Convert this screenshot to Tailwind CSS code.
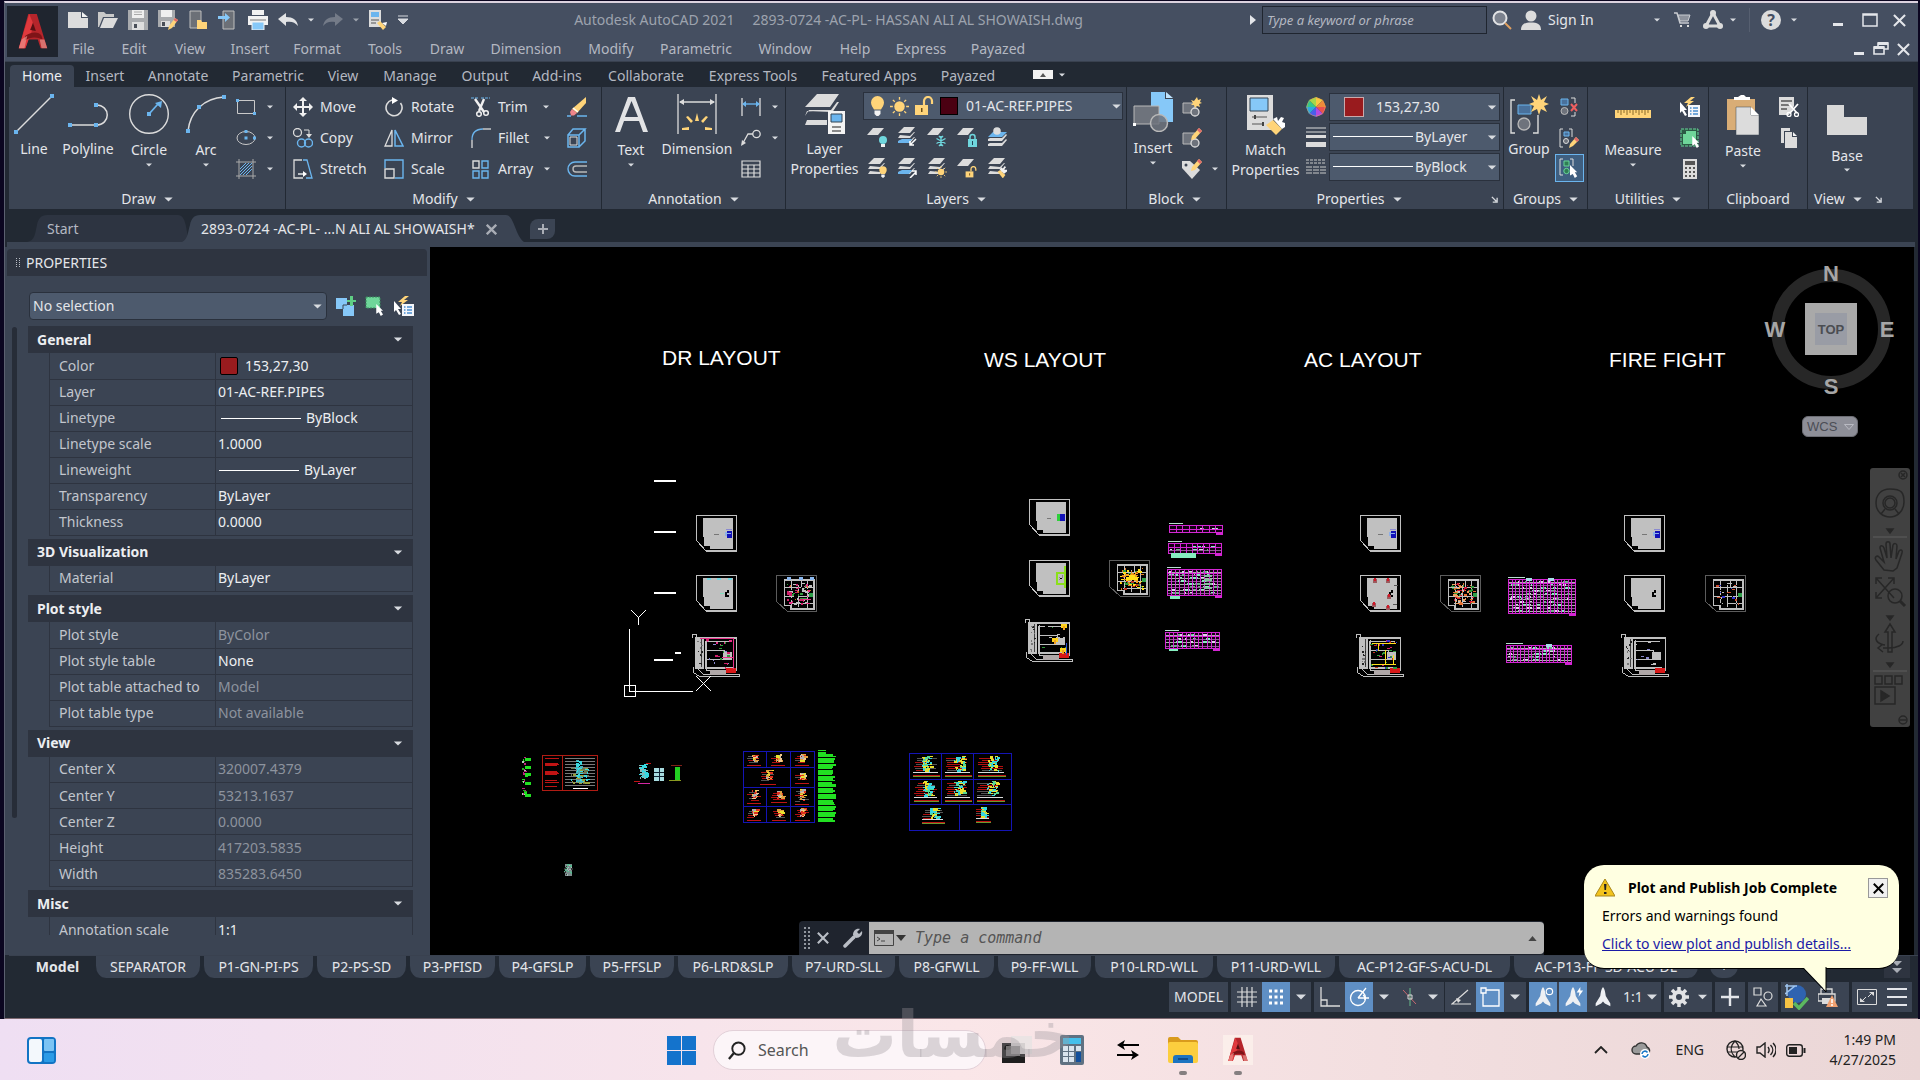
<!DOCTYPE html>
<html lang="en">
<head>
  <meta charset="UTF-8" />
  <meta name="viewport" content="width=device-width, initial-scale=1.0" />
  <title>Autodesk AutoCAD 2021 - 2893-0724 -AC-PL- HASSAN ALI AL SHOWAISH.dwg</title>
  <script src="https://cdn.jsdelivr.net/npm/@tailwindcss/browser@4"></script>
</head>
<body class="h-screen flex flex-col overflow-hidden bg-[#0b0620] pt-px text-[14px] leading-5 text-[#e4e6ea] whitespace-nowrap font-['Noto_Sans','Open_Sans',sans-serif]">

  <!-- Shared icons -->
  <svg class="hidden">
    <symbol id="dd" viewBox="0 0 10 6"><path d="M0 .5h10L5 5.5z" fill="#d8dbe0"/></symbol>
    <symbol id="x" viewBox="0 0 14 14"><path d="M1 1l12 12M13 1L1 13" stroke="#e4e6ea" stroke-width="2.2" fill="none"/></symbol>
    <symbol id="launch" viewBox="0 0 8 8"><path d="M1 1l5 5M7 2v5H2" stroke="#d8dbe0" stroke-width="1.5" fill="none"/></symbol>
    <symbol id="sheets" viewBox="0 0 20 20"><path d="M7 0h11l-5 6H1zM3 8l-2 3h12l5-6h-1l-4 4zM3 13l-2 3h12l5-6h-1l-4 4z" fill="#dcdcdc"/></symbol>
    <symbol id="sheet" viewBox="0 0 20 20"><path d="M6 1h11l-6 7H0z" fill="#dcdcdc"/></symbol>
    <symbol id="sun" viewBox="0 0 20 20"><circle cx="10" cy="10" r="5.5" fill="#ffd479"/><path d="M10 0v3M10 17v3M0 10h3M17 10h3M3 3l2 2M15 15l2 2M17 3l-2 2M5 15l-2 2" stroke="#ffd479" stroke-width="1.4"/></symbol>
    <symbol id="bulb" viewBox="0 0 14 20"><path d="M7 0a6.500 6.500 0 0 1 6.500 6.500c0 3-2 5-3 7h-7c-1-2-3-4-3-7A6.500 6.500 0 0 1 7 0z" fill="#ffd479"/><path d="M4 14.500h6V18l-2 2H6l-2-2z" fill="#f3f3f3"/></symbol>
    <symbol id="unlock" viewBox="0 0 20 20"><path d="M1 9h13v10H1z" fill="#ffd479"/><path d="M10 9V5a4 4 0 0 1 8 0v3" fill="none" stroke="#ffd479" stroke-width="2.2"/><path d="M7 12h1.500v4H7z" fill="#6b4d17"/></symbol>
    <symbol id="brush" viewBox="0 0 20 20"><path d="M4 9l4-3 8 8-4 5z" fill="#ffd479"/><path d="M7 5l3-3 2 2 3-4 2 2-3 3 3 1 2-1v3l-5 4z" fill="#f3f3f3"/></symbol>
    <symbol id="cur" viewBox="0 0 10 16"><path d="M0 0l9 9H6l3 5-3 2-2.500-5L0 13z" fill="#fff"/></symbol>
    <symbol id="quick" viewBox="0 0 20 20"><path d="M11 0L4 6h4L6 10l8-6h-4l5-4z" fill="#ffd479"/><path d="M0 5l7 8H4l3 5-2 1-3-5-2 2z" fill="#fff"/><path d="M8 8h12v12H8z" fill="#f4f6fa"/><path d="M10 11h1.500M10 14h1.500M10 17h1.500M13 11h5M13 14h5M13 17h5" stroke="#4a8fd0" stroke-width="1.300"/></symbol>
    <symbol id="arrowA" viewBox="0 0 20 24"><path d="M10 1c2 2 2.500 6 3 10l5 8v3l-6-3-2-2-2 2-6 3v-3l5-8C7.500 7 8 3 10 1z" fill="#eef0f3"/></symbol>
    <symbol id="acad" viewBox="0 0 32 40"><path d="M11 1h9l11 36h-7l-3-9H11l-3 9H1z" fill="#b5252b"/><path d="M12 1l5 12-9 24H1z" fill="#e0393d"/><path d="M8 24c8-5 14-4 17 0l1 4c-6-3-12-3-19 1z" fill="#7e1418"/><path d="M4 28l6-4-3 13H1zM23 28l5 0 3 9h-6z" fill="#e9918c" opacity=".7"/><path d="M13 18l3-8 3 9z" fill="#571013"/></symbol>
  </svg>

  <!-- Application window -->
  <div class="relative flex-1 min-h-0 flex flex-col ml-1 mr-[2px] border-t-2 border-l border-b border-t-[#dcd3df] border-l-[#5b6070] border-b-[#7f6a72] bg-[#222933]">

    <!-- Title bar and menus -->
    <header class="flex bg-[#454f61] border-b border-[#39414f] text-[#b4b8c1]">
      <button class="ml-[2px] mt-[3px] mb-1 size-[51px] bg-[#1f252f] flex items-center justify-center shrink-0" aria-label="Application menu"><svg class="w-8 h-[38px]"><use href="#acad"/></svg></button>
      <div class="flex-1 min-w-0">
        <div class="flex items-center h-[34px] pl-[5px] pr-[5px]">
          <button class="w-[30px] flex justify-center" aria-label="New"><svg class="size-5" viewBox="0 0 20 20"><path d="M0 2h13v6h7v10H0z" fill="#dcdcdc"/><path d="M14 2l6 5h-6z" fill="#f2f2f2"/></svg></button>
          <button class="w-[30px] flex justify-center" aria-label="Open"><svg class="size-5" viewBox="0 0 20 20"><path d="M0 2h6l2 2h8v3H5L1 17H0z" fill="#c9c9c9"/><path d="M6 8h14l-5 10H2z" fill="#dcdcdc"/></svg></button>
          <button class="w-[30px] flex justify-center" aria-label="Save"><svg class="size-5" viewBox="0 0 20 20"><path d="M0 0h20v20H0z" fill="#a9abae"/><path d="M4 0h12v8H4z" fill="#efefef"/><path d="M4 12h12v8H4z" fill="#dedede"/><path d="M6 14h3v4H6z" fill="#4a4f58"/><path d="M6 2h8M6 4.500h8" stroke="#aaa"/></svg></button>
          <button class="w-[30px] flex justify-center" aria-label="Save as"><svg class="size-5" viewBox="0 0 20 20"><path d="M0 0h17v17H0z" fill="#a9abae"/><path d="M3 0h11v7H3z" fill="#efefef"/><path d="M3 11h9v6H3z" fill="#dedede"/><path d="M4 12h3v4H4z" fill="#4a4f58"/><path d="M17 8l3 2-6 8-4 2 1-4z" fill="#ffd479"/><path d="M17 8l3 2-1.500 2-3-2z" fill="#e06a6a"/></svg></button>
          <button class="w-[30px] flex justify-center" aria-label="Open from mobile"><svg class="size-5" viewBox="0 0 20 20"><path d="M2 1h11v17H2z" fill="#6c7077" stroke="#bfbfbf"/><path d="M9 10h4l1 2h5v7H9z" fill="#ffd479"/></svg></button>
          <button class="w-[30px] flex justify-center" aria-label="Save to mobile"><svg class="size-5" viewBox="0 0 20 20"><path d="M5 1h11v18H5z" fill="#6c7077" stroke="#bfbfbf"/><path d="M0 6h7V3l5 4.500L7 12V9H0z" fill="#86c8f8"/></svg></button>
          <button class="w-[30px] flex justify-center" aria-label="Plot"><svg class="size-5" viewBox="0 0 20 20"><path d="M4 0h12v5H4zM0 6h20v9H0z" fill="#f2f2f2"/><path d="M4 12h12v8H4z" fill="#86c8f8" stroke="#f2f2f2"/><path d="M2 10h16" stroke="#777"/></svg></button>
          <button class="w-[30px] flex justify-center" aria-label="Undo"><svg class="size-5" viewBox="0 0 20 20"><path d="M0 9l8-6v4c7 0 11 3 12 9-3-4-7-5-12-4v4z" fill="#e2e3e5"/></svg></button>
          <button class="w-[15px] flex justify-center" aria-label="Undo list"><svg class="w-[6px] h-1"><use href="#dd"/></svg></button>
          <button class="w-[30px] flex justify-center" aria-label="Redo"><svg class="size-5" viewBox="0 0 20 20"><path d="M20 9l-8-6v4C5 7 1 10 0 16c3-4 7-5 12-4v4z" fill="#747b88"/></svg></button>
          <button class="w-[15px] flex justify-center opacity-60" aria-label="Redo list"><svg class="w-[6px] h-1"><use href="#dd"/></svg></button>
          <button class="w-[30px] flex justify-center" aria-label="Match"><svg class="size-5" viewBox="0 0 20 20"><path d="M1 0h12v17H1z" fill="#dcdcdc"/><path d="M3 2h8v5H3z" fill="#6bb5ee"/><path d="M3 10h8M3 13h5" stroke="#555"/><path d="M9 13l3-2 6 6-3 3z" fill="#ffd479"/><path d="M14 13l5-1-1 4z" fill="#fff"/></svg></button>
          <button class="w-5 flex justify-center" aria-label="Customize"><svg class="w-[10px] h-[10px]" viewBox="0 0 10 10"><path d="M0 1h10M0 4h10L5 9z" fill="#d8dbe0" stroke="#d8dbe0"/></svg></button>
          <h1 class="flex-1 text-center text-[#9da3ae] whitespace-pre">Autodesk AutoCAD 2021     2893-0724 -AC-PL- HASSAN ALI AL SHOWAISH.dwg</h1>
          <button class="w-[18px] flex justify-center" aria-label="Hide search"><svg class="w-[6px] h-[10px]" viewBox="0 0 6 10"><path d="M0 0l6 5-6 5z" fill="#e4e6ea"/></svg></button>
          <input type="text" aria-label="Search help" placeholder="Type a keyword or phrase" class="w-[225px] h-7 px-1 bg-[#454f61] border border-[#1f252f] italic text-[13px] placeholder:text-[#b4b8c1]" />
          <button class="w-[29px] flex justify-center" aria-label="Search"><svg class="size-5" viewBox="0 0 20 20"><circle cx="8" cy="8" r="6.500" fill="#7c828e" stroke="#e2e3e5" stroke-width="2"/><path d="M13 13l6 6" stroke="#e0a060" stroke-width="2"/></svg></button>
          <button class="w-[83px] pl-[5px] flex items-center gap-[7px] text-[#e4e6ea]"><svg class="size-5" viewBox="0 0 20 20"><circle cx="10" cy="6" r="5.500" fill="#dcdcdc"/><path d="M0 20c0-6 4-7.500 10-7.500S20 14 20 20z" fill="#dcdcdc"/></svg>Sign In</button>
          <button class="ml-[50px] w-4 flex justify-center" aria-label="Account"><svg class="w-[6px] h-1"><use href="#dd"/></svg></button>
          <button class="w-[34px] flex justify-center" aria-label="App store"><svg class="size-[18px]" viewBox="0 0 18 18"><path d="M1 2h3l3 10h9" fill="none" stroke="#c9ccd1" stroke-width="1.500"/><path d="M5 4h12l-2 6H7z" fill="#8d929c" stroke="#c9ccd1"/><path d="M7 14h2v2H7zM14 14h2v2h-2z" fill="#dcdcdc"/></svg></button>
          <button class="w-[27px] flex justify-center" aria-label="Autodesk app"><svg class="size-5" viewBox="0 0 20 20"><path d="M10 3L3 16h14z" fill="none" stroke="#dcdcdc" stroke-width="3"/><circle cx="10" cy="3" r="3" fill="#dcdcdc"/><circle cx="3" cy="16" r="3" fill="#dcdcdc"/><circle cx="17" cy="16" r="3" fill="#dcdcdc"/></svg></button>
          <button class="w-[14px] flex justify-center" aria-label="App list"><svg class="w-[6px] h-1"><use href="#dd"/></svg></button>
          <span class="ml-[9px] mr-[6px] w-px h-6 bg-[#565f70]"></span>
          <button class="w-[30px] flex justify-center" aria-label="Help"><span class="size-5 rounded-full bg-[#dcdcdc] text-[#454f61] text-[16px] font-bold leading-5">?</span></button>
          <button class="w-4 flex justify-center" aria-label="Help list"><svg class="w-[6px] h-1"><use href="#dd"/></svg></button>
          <button class="ml-5 w-8 flex justify-center" aria-label="Minimize"><svg class="size-[14px]" viewBox="0 0 14 14"><path d="M2 10h10v3H2z" fill="#e4e6ea"/></svg></button>
          <button class="w-8 flex justify-center" aria-label="Maximize"><svg class="size-4" viewBox="0 0 16 16"><path d="M1 2h14v12H1zM1 3h14" fill="none" stroke="#e4e6ea" stroke-width="1.500"/></svg></button>
          <button class="w-[27px] flex justify-center" aria-label="Close"><svg class="size-[13px]"><use href="#x"/></svg></button>
        </div>
        <nav class="flex items-center h-6 pl-px">
          <a href="#" class="w-[49px] text-center">File</a>
          <a href="#" class="w-[52px] text-center">Edit</a>
          <a href="#" class="w-[60px] text-center">View</a>
          <a href="#" class="w-[60px] text-center">Insert</a>
          <a href="#" class="w-[74px] text-center">Format</a>
          <a href="#" class="w-[62px] text-center">Tools</a>
          <a href="#" class="w-[62px] text-center">Draw</a>
          <a href="#" class="w-[96px] text-center">Dimension</a>
          <a href="#" class="w-[74px] text-center">Modify</a>
          <a href="#" class="w-[96px] text-center">Parametric</a>
          <a href="#" class="w-[82px] text-center">Window</a>
          <a href="#" class="w-[58px] text-center">Help</a>
          <a href="#" class="w-[74px] text-center">Express</a>
          <a href="#" class="w-[80px] text-center">Payazed</a>
          <span class="flex-1"></span>
          <button class="w-[22px] flex justify-center" aria-label="Minimize drawing"><svg class="size-[14px]" viewBox="0 0 14 14"><path d="M2 10h10v3H2z" fill="#e4e6ea"/></svg></button>
          <button class="w-[22px] flex justify-center" aria-label="Restore drawing"><svg class="size-4" viewBox="0 0 16 16"><path d="M5 5V2h10v6h-4M1 6h10v7H1z" fill="none" stroke="#e4e6ea" stroke-width="1.600"/><path d="M5 1h10v3H5zM1 5h10v3H1z" fill="#e4e6ea"/></svg></button>
          <button class="w-[22px] mr-1 flex justify-center" aria-label="Close drawing"><svg class="size-[13px]"><use href="#x"/></svg></button>
        </nav>
      </div>
    </header>

    <!-- Ribbon tabs -->
    <nav class="flex items-end h-[25px] pl-[5px] leading-[22px] text-[#b4b8c1]">
      <a href="#" class="w-16 text-center rounded-t-sm bg-[#3b4453] text-[#eceef1]">Home</a>
      <a href="#" class="w-[62px] text-center">Insert</a>
      <a href="#" class="w-[84px] text-center">Annotate</a>
      <a href="#" class="w-[96px] text-center">Parametric</a>
      <a href="#" class="w-[54px] text-center">View</a>
      <a href="#" class="w-[80px] text-center">Manage</a>
      <a href="#" class="w-[70px] text-center">Output</a>
      <a href="#" class="w-[74px] text-center">Add-ins</a>
      <a href="#" class="w-[104px] text-center">Collaborate</a>
      <a href="#" class="w-[110px] text-center">Express Tools</a>
      <a href="#" class="w-[122px] text-center">Featured Apps</a>
      <a href="#" class="w-[76px] text-center">Payazed</a>
      <button class="self-center ml-[27px] flex items-center gap-[6px]" aria-label="Minimize ribbon"><svg class="w-5 h-[9px]" viewBox="0 0 20 9"><path d="M0 0h20v9H0z" fill="#f2f2f2"/><path d="M7 7l3-4 3 4z" fill="#555"/></svg><svg class="w-[6px] h-1"><use href="#dd"/></svg></button>
    </nav>

    <!-- Ribbon -->
    <div class="flex h-[122px] ml-1 mr-[5px] bg-[#3b4453]">
      <section class="w-[277px] border-r border-[#222933] flex flex-col shrink-0">
        <div class="flex flex-1">
          <button class="w-[50px] pt-[7px] flex flex-col items-center justify-start"><svg class="size-10" viewBox="0 0 40 40"><path d="M2 38L38 2" stroke="#dcdcdc" stroke-width="1.500"/><path d="M0 36h4v4H0zM36 0h4v4h-4z" fill="#6bb5ee"/></svg><span class="mt-[5px]">Line</span></button>
          <button class="w-[58px] pt-[7px] flex flex-col items-center justify-start"><svg class="size-10" viewBox="0 0 40 40"><path d="M2 31h26c15 0 15-20 0-20" fill="none" stroke="#dcdcdc" stroke-width="1.500"/><path d="M0 29h4v4H0zM26 29h4v4h-4zM26 9h4v4h-4z" fill="#6bb5ee"/></svg><span class="mt-[5px]">Polyline</span></button>
          <button class="w-16 pt-[7px] flex flex-col items-center justify-start"><svg class="size-10" viewBox="0 0 40 40"><circle cx="20" cy="20" r="19.300" fill="none" stroke="#dcdcdc" stroke-width="1.400"/><path d="M20 20l9-10" stroke="#6bb5ee" stroke-width="1.800"/><path d="M26 9l7-2-1 7zM18 18h4v4h-4z" fill="#6bb5ee"/></svg><span class="mt-[6px]">Circle</span><svg class="w-[6px] h-1 mt-[3px]"><use href="#dd"/></svg></button>
          <button class="w-[50px] pt-[7px] flex flex-col items-center justify-start"><svg class="size-10" viewBox="0 0 40 40"><path d="M2 37C4 18 18 4 38 3" fill="none" stroke="#dcdcdc" stroke-width="1.500"/><path d="M0 35h4v4H0zM11 11h4v4h-4zM36 1h4v4h-4z" fill="#6bb5ee"/></svg><span class="mt-[6px]">Arc</span><svg class="w-[6px] h-1 mt-[3px]"><use href="#dd"/></svg></button>
          <div class="pt-1 pl-[5px]">
            <button class="flex items-center gap-[11px] h-[31px]" aria-label="Rectangle"><svg class="size-5" viewBox="0 0 20 20"><path d="M1.500 3.500h17v13h-17z" fill="none" stroke="#c9c9c9"/><path d="M0 2h3v3H0zM17 15h3v3h-3z" fill="#6bb5ee"/></svg><svg class="w-[6px] h-1"><use href="#dd"/></svg></button>
            <button class="flex items-center gap-[11px] h-[31px]" aria-label="Ellipse"><svg class="size-5" viewBox="0 0 20 20"><ellipse cx="10" cy="10" rx="9" ry="6.500" fill="none" stroke="#c9c9c9"/><path d="M8.500 8.500h3v3h-3zM8.500 2h3v3h-3zM17 8.500h3v3h-3z" fill="#6bb5ee"/></svg><svg class="w-[6px] h-1"><use href="#dd"/></svg></button>
            <button class="flex items-center gap-[11px] h-[31px]" aria-label="Hatch"><svg class="size-5" viewBox="0 0 20 20"><path d="M3 0v20M17 0v20M0 3h20M0 17h20" stroke="#aaa"/><path d="M4 10l6-6M4 16L16 4M10 16l6-6M4 13l9-9M7 16l9-9" stroke="#6bb5ee"/></svg><svg class="w-[6px] h-1"><use href="#dd"/></svg></button>
          </div>
        </div>
        <button class="h-5 flex items-center justify-center gap-2">Draw<svg class="w-[9px] h-[5px]"><use href="#dd"/></svg></button>
      </section>

      <section class="w-[316px] border-r border-[#222933] flex flex-col shrink-0">
        <div class="flex flex-1 pt-1 pl-[7px]">
          <div class="w-[91px]">
            <button class="flex items-center gap-[7px] h-[31px]"><svg class="size-5" viewBox="0 0 20 20"><path d="M10 0l4 4h-3v5h5V6l4 4-4 4v-3h-5v5h3l-4 4-4-4h3v-5H4v3l-4-4 4-4v3h5V4H6z" fill="#f0f0f0"/></svg>Move</button>
            <button class="flex items-center gap-[7px] h-[31px]"><svg class="size-5" viewBox="0 0 20 20"><circle cx="4.500" cy="4.500" r="4" fill="none" stroke="#dcdcdc" stroke-width="1.300"/><path d="M11 2h5v5" fill="none" stroke="#dcdcdc"/><path d="M13 6h6l-3 4z" fill="#dcdcdc"/><circle cx="8.500" cy="15" r="4" fill="none" stroke="#6bb5ee" stroke-width="1.400"/><circle cx="15.500" cy="15" r="4" fill="none" stroke="#6bb5ee" stroke-width="1.400"/></svg>Copy</button>
            <button class="flex items-center gap-[7px] h-[31px]"><svg class="size-5" viewBox="0 0 20 20"><path d="M9 1H1v18h9" fill="none" stroke="#dcdcdc" stroke-width="1.300"/><path d="M10 1h4l5 18h-6" fill="none" stroke="#6bb5ee" stroke-width="1.300"/><path d="M5 15h6" stroke="#fff" stroke-width="1.300"/><path d="M10 12l4 3-4 3z" fill="#fff"/></svg>Stretch</button>
          </div>
          <div class="w-[87px]">
            <button class="flex items-center gap-[7px] h-[31px]"><svg class="size-5" viewBox="0 0 20 20"><path d="M8 3a8 8 0 1 0 8.500 3" fill="none" stroke="#dcdcdc" stroke-width="1.600"/><path d="M8 0l6 3.500L8 7z" fill="#fff"/></svg>Rotate</button>
            <button class="flex items-center gap-[7px] h-[31px]"><svg class="size-5" viewBox="0 0 20 20"><path d="M8 2v16H1z" fill="none" stroke="#dcdcdc" stroke-width="1.300"/><path d="M11 2v16h8z" fill="none" stroke="#6bb5ee" stroke-width="1.500"/></svg>Mirror</button>
            <button class="flex items-center gap-[7px] h-[31px]"><svg class="size-5" viewBox="0 0 20 20"><path d="M1 9V1h18v18h-8" fill="none" stroke="#6bb5ee" stroke-width="1.400"/><path d="M1 10h9v9H1z" fill="none" stroke="#dcdcdc" stroke-width="1.400"/></svg>Scale</button>
          </div>
          <div class="w-[96px]">
            <button class="flex items-center gap-[7px] h-[31px]"><svg class="size-5" viewBox="0 0 20 20"><path d="M0 1h8M10 1h9" stroke="#6bb5ee" stroke-dasharray="3 1"/><path d="M4 2l9 13M13 2L8 14" stroke="#f0f0f0" stroke-width="2.400"/><circle cx="8" cy="17" r="2.300" fill="none" stroke="#f0f0f0" stroke-width="1.500"/><circle cx="15" cy="16" r="2.300" fill="none" stroke="#f0f0f0" stroke-width="1.500"/></svg>Trim<svg class="w-[6px] h-1 ml-2"><use href="#dd"/></svg></button>
            <button class="flex items-center gap-[7px] h-[31px]"><svg class="size-5" viewBox="0 0 20 20"><path d="M1 20V12" stroke="#dcdcdc" stroke-width="1.300"/><path d="M1 12C1 5 5 1 12 1" fill="none" stroke="#6bb5ee" stroke-width="1.300"/><path d="M12 1h8" stroke="#dcdcdc" stroke-width="1.300"/></svg>Fillet<svg class="w-[6px] h-1 ml-2"><use href="#dd"/></svg></button>
            <button class="flex items-center gap-[7px] h-[31px]"><svg class="size-5" viewBox="0 0 20 20"><path d="M2 12h6v7H2zM11 12h6v7h-6zM11 2h6v7h-6z" fill="none" stroke="#6bb5ee" stroke-width="1.400"/><path d="M2 2h6v7H2z" fill="none" stroke="#dcdcdc" stroke-width="1.400"/></svg>Array<svg class="w-[6px] h-1 ml-1"><use href="#dd"/></svg></button>
          </div>
          <div>
            <button class="flex items-center h-[31px]" aria-label="Erase"><svg class="size-5" viewBox="0 0 20 20"><path d="M0 19h4M10 19h10" stroke="#6bb5ee" stroke-width="1.500"/><path d="M19 0v6l-9 10-5-4z" fill="#ffd479"/><path d="M5 12l5 4-3 2.500H4L3 15z" fill="#f0868a"/><path d="M6 11l5 4" stroke="#fff" stroke-width="1.500"/></svg></button>
            <button class="flex items-center h-[31px]" aria-label="Explode"><svg class="size-5" viewBox="0 0 20 20"><path d="M1 7h11v12H1zM1 7l5-6h12l-6 6M18 1v12l-6 6" fill="none" stroke="#6bb5ee" stroke-width="1.500"/><path d="M3 9h7v8H3z" fill="none" stroke="#dcdcdc"/></svg></button>
            <button class="flex items-center h-[31px]" aria-label="Offset"><svg class="size-5" viewBox="0 0 20 20"><path d="M20 3H8a7 7 0 0 0 0 14h12" fill="none" stroke="#6bb5ee" stroke-width="1.400"/><path d="M20 7H9a3 3 0 0 0 0 6h11" fill="none" stroke="#b9b9b9" stroke-width="1.400"/></svg></button>
          </div>
        </div>
        <button class="h-5 flex items-center justify-center gap-2">Modify<svg class="w-[9px] h-[5px]"><use href="#dd"/></svg></button>
      </section>

      <section class="w-[184px] border-r border-[#222933] flex flex-col shrink-0">
        <div class="flex flex-1 pl-px">
          <button class="w-14 pt-[7px] flex flex-col items-center justify-start"><svg class="size-10" viewBox="0 0 40 40"><path d="M17 3h7l13 35h-5l-4-11H13L9 38H4zm3.500 4L14 23h13z" fill="#e2e3e5" fill-rule="evenodd"/></svg><span class="mt-[6px]">Text</span><svg class="w-[6px] h-1 mt-[3px]"><use href="#dd"/></svg></button>
          <button class="w-[76px] pt-[7px] flex flex-col items-center justify-start"><svg class="size-10" viewBox="0 0 40 40"><path d="M1 0v40M39 0v40M3 8h34" stroke="#dcdcdc" stroke-width="1.300"/><path d="M2 8l5-3v6zM38 8l-5-3v6z" fill="#dcdcdc"/><path d="M18 27l2-8 2 8zM14 29l-5-6 2-1 5 5zM26 29l5-6-2-1-5 5zM12 36H5v-2l7-1zM28 36h7v-2l-7-1z" fill="#ffd479"/></svg><span class="mt-[5px]">Dimension</span></button>
          <div class="pt-1 pl-[6px]">
            <button class="flex items-center gap-[11px] h-[31px]" aria-label="Linear"><svg class="size-5" viewBox="0 0 20 20"><path d="M1 1v18M19 1v18" stroke="#dcdcdc" stroke-width="1.300"/><path d="M2 7h16" stroke="#6bb5ee" stroke-width="1.400"/><path d="M1 7l4-3v6zM19 7l-4-3v6z" fill="#6bb5ee"/></svg><svg class="w-[6px] h-1"><use href="#dd"/></svg></button>
            <button class="flex items-center gap-[11px] h-[31px]" aria-label="Leader"><svg class="size-5" viewBox="0 0 20 20"><circle cx="15.500" cy="6" r="3.700" fill="none" stroke="#dcdcdc" stroke-width="1.300"/><path d="M12 6H7L2 15" fill="none" stroke="#dcdcdc" stroke-width="1.300"/><path d="M0 18l1-6 4 3z" fill="#dcdcdc"/></svg><svg class="w-[6px] h-1"><use href="#dd"/></svg></button>
            <button class="flex items-center h-[31px]" aria-label="Table"><svg class="size-5" viewBox="0 0 20 20"><path d="M1 2h18v16H1zM1 6h18M1 10h18M1 14h18M7 6v12M13 6v12" fill="none" stroke="#dcdcdc" stroke-width="1.200"/></svg></button>
          </div>
        </div>
        <button class="h-5 flex items-center justify-center gap-2">Annotation<svg class="w-[9px] h-[5px]"><use href="#dd"/></svg></button>
      </section>

      <section class="w-[341px] border-r border-[#222933] flex flex-col shrink-0">
        <div class="flex flex-1">
          <button class="w-[77px] pt-[7px] flex flex-col items-center justify-start"><svg class="size-10" viewBox="0 0 40 40"><path d="M12 0h22l-9 13H0zM2 17l-2 5h24l2-4M2 26l-2 5h22v-5zM4 16h22l6-8h2l-9 14H0z" fill="#dcdcdc"/><path d="M23 17h17v23H23z" fill="#f4f4f4"/><path d="M26 20h11v8H26z" fill="#6bb5ee" stroke="#345"/><path d="M27 33h9M27 37h9" stroke="#666" stroke-width="1.500"/></svg><span class="mt-[5px] leading-5">Layer<br>Properties</span></button>
          <div class="flex-1 pt-[5px] pr-[3px]">
            <div class="relative">
              <select aria-label="Layer" class="block w-full h-7 appearance-none bg-[#4d5a6d] border border-[#2a313d] pl-[102px]"><option>01-AC-REF.PIPES</option></select>
              <div class="absolute inset-y-0 left-[7px] flex items-center gap-[5px] pointer-events-none"><svg class="w-[15px] h-5"><use href="#bulb"/></svg><svg class="size-[19px]"><use href="#sun"/></svg><svg class="size-5"><use href="#unlock"/></svg><span class="size-[18px] ml-px bg-[#4a0012] border border-black"></span></div>
              <svg class="absolute right-[2px] top-3 w-[9px] h-[5px]"><use href="#dd"/></svg>
            </div>
            <div class="flex gap-[10px] pt-[7px] pl-1">
              <button aria-label="Off"><svg class="block size-5" viewBox="0 0 20 20"><use href="#sheet"/><circle cx="16" cy="13" r="4" fill="#6fd6dd"/><path d="M14 17h4v3h-4z" fill="#f0f0f0"/></svg></button>
              <button aria-label="Isolate"><svg class="block size-5" viewBox="0 0 20 20"><use href="#sheets"/><path d="M1 14l4-2h10l-3 4H1z" fill="#6bb5ee"/><path d="M19 12l-6 6M13 14v4h4" stroke="#fff" fill="none" stroke-width="1.500"/></svg></button>
              <button aria-label="Freeze"><svg class="block size-5" viewBox="0 0 20 20"><use href="#sheet"/><path d="M14 9v10M9.500 11.500l9 5M18.500 11.500l-9 5M12 9l2 2 2-2M12 19l2-2 2 2" stroke="#6fd6dd" fill="none" stroke-width="1.400"/></svg></button>
              <button aria-label="Lock"><svg class="block size-5" viewBox="0 0 20 20"><use href="#sheet"/><path d="M11 12h9v8h-9z" fill="#6fd6dd"/><path d="M13 12v-2a2.500 2.500 0 0 1 5 0v2" fill="none" stroke="#6fd6dd" stroke-width="1.500"/><path d="M15 14h1v4h-1z" fill="#245"/></svg></button>
              <button aria-label="Make current"><svg class="block size-5" viewBox="0 0 20 20"><path d="M6 5h14l-5 5H1z" fill="#6bb5ee"/><path d="M1 12l2-1h12l4-4 1 1-5 6H1zM1 17l2-1h12l4-4 1 1-5 6H1z" fill="#dcdcdc"/><circle cx="10" cy="4" r="3.800" fill="#dcdcdc"/></svg></button>
            </div>
            <div class="flex gap-[10px] pt-[11px] pl-1">
              <button aria-label="On"><svg class="block size-5" viewBox="0 0 20 20"><use href="#sheets"/><svg x="12" y="8" width="8" height="12"><use href="#bulb"/></svg></svg></button>
              <button aria-label="Unisolate"><svg class="block size-5" viewBox="0 0 20 20"><use href="#sheets"/><path d="M1 14l4-2h10l-3 4H1z" fill="#6bb5ee"/><path d="M13 20l6-6M15 13h4v4" stroke="#fff" fill="none" stroke-width="1.500"/></svg></button>
              <button aria-label="Thaw"><svg class="block size-5" viewBox="0 0 20 20"><use href="#sheets"/><svg x="8" y="8" width="12" height="12"><use href="#sun"/></svg></svg></button>
              <button aria-label="Unlock"><svg class="block size-5" viewBox="0 0 20 20"><use href="#sheet"/><svg x="8" y="8" width="12" height="12"><use href="#unlock"/></svg></svg></button>
              <button aria-label="Match layer"><svg class="block size-5" viewBox="0 0 20 20"><use href="#sheets"/><svg x="8" y="8" width="13" height="13"><use href="#brush"/></svg></svg></button>
            </div>
          </div>
        </div>
        <button class="h-5 flex items-center justify-center gap-2">Layers<svg class="w-[9px] h-[5px]"><use href="#dd"/></svg></button>
      </section>

      <section class="w-[100px] border-r border-[#222933] flex flex-col shrink-0">
        <div class="flex flex-1">
          <button class="w-[52px] pt-[5px] flex flex-col items-center justify-start"><svg class="size-10" viewBox="0 0 40 40"><path d="M18 0h14v7h8v23H18z" fill="#86c8f8"/><path d="M33 0l7 6h-7z" fill="#bfe2fb"/><path d="M1 14h25v18H1z" fill="#6e737c" stroke="#b9b9b9"/><circle cx="26" cy="31" r="8.500" fill="#6e737c" fill-opacity=".85" stroke="#b9b9b9" stroke-width="1.500"/><path d="M0 31h3v3H0z" fill="#fff"/></svg><span class="mt-[6px]">Insert</span><svg class="w-[6px] h-1 mt-[3px]"><use href="#dd"/></svg></button>
          <div class="pt-1 pl-[3px]">
            <button class="flex items-center h-[31px]" aria-label="Create block"><svg class="size-5" viewBox="0 0 20 20"><path d="M1 6h12v10H1z" fill="#6e737c" stroke="#b9b9b9"/><circle cx="13" cy="15" r="4" fill="#6e737c" stroke="#dcdcdc" stroke-width="1.300"/><path d="M15 0l1 3 3-1-1 3 2 1-3 1 1 3-3-1-2 2-1-3-3 0 2-2-2-3 3 1z" fill="#ffd479"/></svg></button>
            <button class="flex items-center h-[31px]" aria-label="Edit block"><svg class="size-5" viewBox="0 0 20 20"><path d="M1 5h12v11H1z" fill="#6e737c" stroke="#b9b9b9"/><circle cx="13" cy="15" r="4" fill="#6e737c" stroke="#dcdcdc" stroke-width="1.300"/><path d="M17 0l3 3-7 8-4 1 1-4z" fill="#ffd479"/><path d="M17 0l3 3-2 2-3-3z" fill="#e06a6a"/></svg></button>
            <button class="flex items-center gap-[10px] h-[31px]" aria-label="Edit attributes"><svg class="size-5" viewBox="0 0 20 20"><path d="M0 2h8l10 9-8 9L0 9z" fill="#dcdcdc"/><circle cx="4" cy="6" r="1.500" fill="#3b4453"/><path d="M17 0l3 3-7 8-4 1 1-4z" fill="#ffd479"/><path d="M17 0l3 3-2 2-3-3z" fill="#e06a6a"/></svg><svg class="w-[6px] h-1"><use href="#dd"/></svg></button>
          </div>
        </div>
        <button class="h-5 flex items-center justify-center gap-2 pr-1">Block<svg class="w-[9px] h-[5px]"><use href="#dd"/></svg></button>
      </section>

      <section class="w-[277px] border-r border-[#222933] flex flex-col shrink-0">
        <div class="flex flex-1">
          <button class="w-[77px] pt-2 flex flex-col items-center justify-start"><svg class="size-10" viewBox="0 0 40 40"><path d="M1 0h26v35H1z" fill="#dcdcdc"/><path d="M4 3h18v13H4z" fill="#86c8f8" stroke="#345"/><path d="M6 22h15M6 29h12" stroke="#555"/><path d="M8 20h2v4H8zM16 27h2v4h-2z" fill="#444"/><path d="M20 30l7-5 9 9-6 6z" fill="#ffd479"/><path d="M27 24l4-2 1 4 3-4 3 1-2 4 3 1v4l-3 2z" fill="#fff"/></svg><span class="mt-[5px] leading-5">Match<br>Properties</span></button>
          <div class="pt-[6px] w-[25px] flex flex-col gap-[10px] pl-[2px]">
            <svg class="size-5 mt-1" viewBox="0 0 20 20"><path d="M10 10V0l7 3z" fill="#f9c840"/><path d="M10 10l7-7 3 7z" fill="#f08a3a"/><path d="M10 10h10l-3 7z" fill="#ea5050"/><path d="M10 10l7 7-7 3z" fill="#b44ae0"/><path d="M10 10v10l-7-3z" fill="#4a5ee8"/><path d="M10 10l-7 7-3-7z" fill="#2fa8e0"/><path d="M10 10H0l3-7z" fill="#35c88a"/><path d="M10 10L3 3l7-3z" fill="#a4d84a"/><circle cx="10" cy="10" r="9" fill="none" stroke="#e8a050" stroke-opacity=".5"/></svg>
            <svg class="size-5" viewBox="0 0 20 20"><path d="M0 1h20M0 5h20" stroke="#dcdcdc"/><path d="M0 8h20v3H0zM0 15h20v5H0z" fill="#dcdcdc"/></svg>
            <svg class="size-5" viewBox="0 0 20 20"><path d="M0 3h20M0 6h20" stroke="#c9c9c9" stroke-dasharray="3 1"/><path d="M0 10h20M0 13h20M0 16h20" stroke="#c9c9c9" stroke-dasharray="6 1"/></svg>
          </div>
          <div class="flex-1 pt-[6px] pr-[3px] flex flex-col gap-[2px]">
            <div class="relative">
              <select aria-label="Object color" class="block w-full h-7 appearance-none bg-[#4d5a6d] border border-[#2a313d] pl-[46px]"><option>153,27,30</option></select>
              <span class="absolute left-[15px] top-1 size-5 bg-[#991b1e] border border-[#c9a9ab] pointer-events-none"></span>
              <svg class="absolute right-[3px] top-3 w-[10px] h-[5px]"><use href="#dd"/></svg>
            </div>
            <div class="relative">
              <select aria-label="Lineweight" class="block w-full h-7 appearance-none bg-[#4d5a6d] border border-[#2a313d] pl-[85px]"><option>ByLayer</option></select>
              <span class="absolute left-1 top-[13px] w-20 h-px bg-white"></span>
              <svg class="absolute right-[3px] top-3 w-[10px] h-[5px]"><use href="#dd"/></svg>
            </div>
            <div class="relative">
              <select aria-label="Linetype" class="block w-full h-7 appearance-none bg-[#4d5a6d] border border-[#2a313d] pl-[85px]"><option>ByBlock</option></select>
              <span class="absolute left-1 top-[13px] w-20 h-px bg-white"></span>
              <svg class="absolute right-[3px] top-3 w-[10px] h-[5px]"><use href="#dd"/></svg>
            </div>
          </div>
        </div>
        <div class="flex items-center h-5"><button class="flex-1 flex items-center justify-center gap-2">Properties<svg class="w-[9px] h-[5px]"><use href="#dd"/></svg></button><button class="mr-[5px]" aria-label="Properties dialog"><svg class="size-[7px]"><use href="#launch"/></svg></button></div>
      </section>

      <section class="w-[84px] border-r border-[#222933] flex flex-col shrink-0">
        <div class="flex flex-1">
          <button class="w-[50px] pt-[7px] flex flex-col items-center justify-start"><svg class="size-10" viewBox="0 0 40 40"><path d="M6 6H2v33h4M24 39h5V21" fill="none" stroke="#dcdcdc" stroke-width="1.400"/><path d="M9 11h13v9H9z" fill="#49719c" stroke="#6bb5ee"/><circle cx="15" cy="30" r="6" fill="#6e737c" stroke="#b9b9b9" stroke-width="1.300"/><path d="M30 0l2 6 6-4-3 6 5 2-5 2 3 6-6-3-2 6-2-6-6 3 3-6-5-2 5-2-3-6 6 4z" fill="#ffd479"/></svg><span class="mt-[5px]">Group</span></button>
          <div class="pt-1 w-[30px] flex flex-col items-center">
            <button class="flex items-center h-[31px]" aria-label="Ungroup"><svg class="size-5" viewBox="0 0 20 20"><path d="M2 2h7v6H2z" fill="#49719c" stroke="#6bb5ee"/><circle cx="5.500" cy="14" r="3.500" fill="#6e737c" stroke="#b9b9b9"/><path d="M12 1h4v5M12 19h4v-4" stroke="#dcdcdc" fill="none"/><path d="M12 7l6 7M18 7l-6 7" stroke="#ef5f5f" stroke-width="2"/></svg></button>
            <button class="flex items-center h-[31px]" aria-label="Group edit"><svg class="size-5" viewBox="0 0 20 20"><path d="M4 1H1v18h3M10 1h3v8" stroke="#dcdcdc" fill="none"/><path d="M5 4h5v4H5z" fill="#49719c" stroke="#6bb5ee"/><circle cx="7" cy="13" r="2.500" fill="#6e737c" stroke="#dcdcdc"/><path d="M17 9l3 3-6 6-4 2 1-4z" fill="#ffd479"/><path d="M17 9l3 3-2 2-3-3z" fill="#e06a6a"/></svg></button>
            <button class="flex items-center justify-center h-7 w-[29px] mt-px bg-[#3f5f80] border border-[#6bb5ee]" aria-label="Group selection"><svg class="size-5" viewBox="0 0 20 20"><path d="M4 1H1v16h3M11 1h3v7" stroke="#dcdcdc" fill="none"/><path d="M5 3h5v5H5z" fill="#2f7d55" stroke="#69d69a"/><circle cx="7.500" cy="13" r="2.700" fill="#2f7d55" stroke="#69d69a"/><svg x="11" y="7" width="8" height="13"><use href="#cur"/></svg></svg></button>
          </div>
        </div>
        <button class="h-5 flex items-center justify-center gap-2">Groups<svg class="w-[9px] h-[5px]"><use href="#dd"/></svg></button>
      </section>

      <section class="w-[121px] border-r border-[#222933] flex flex-col shrink-0">
        <div class="flex flex-1">
          <button class="w-[90px] pt-[7px] flex flex-col items-center justify-start"><svg class="size-10" viewBox="0 0 40 40"><path d="M2 16h36v8H2z" fill="#ffd479"/><path d="M5 16v3M8 16v5M11 16v3M14 16v5M17 16v3M20 16v5M23 16v3M26 16v5M29 16v3M32 16v5M35 16v3" stroke="#8a6a2a"/></svg><span class="mt-[6px]">Measure</span><svg class="w-[6px] h-1 mt-[3px]"><use href="#dd"/></svg></button>
          <div class="pt-1 pl-[2px]">
            <button class="flex items-center h-[31px]" aria-label="Quick select"><svg class="size-5"><use href="#quick"/></svg></button>
            <button class="flex items-center h-[31px]" aria-label="Select all"><svg class="size-5" viewBox="0 0 20 20"><path d="M1 1h17v17H1z" fill="#2c5a45" stroke="#69d69a" stroke-dasharray="3 1"/><path d="M3 6h10v10H3zM6 3h10v10H6z" fill="#6fd69a"/><svg x="12" y="8" width="8" height="12"><use href="#cur"/></svg></svg></button>
            <button class="flex items-center h-[31px]" aria-label="Calculator"><svg class="size-5" viewBox="0 0 20 20"><path d="M3 0h14v20H3z" fill="#dcdcdc"/><path d="M5 2h10v4H5zM5 8h2v2H5zM9 8h2v2H9zM13 8h2v2h-2zM5 12h2v2H5zM9 12h2v2H9zM13 12h2v2h-2zM5 16h2v2H5zM9 16h2v2H9zM13 16h2v2h-2z" fill="#555"/></svg></button>
          </div>
        </div>
        <button class="h-5 flex items-center justify-center gap-2">Utilities<svg class="w-[9px] h-[5px]"><use href="#dd"/></svg></button>
      </section>

      <section class="w-[99px] border-r border-[#222933] flex flex-col shrink-0">
        <div class="flex flex-1">
          <button class="w-[68px] pt-2 flex flex-col items-center justify-start"><svg class="size-10" viewBox="0 0 40 40"><path d="M4 4h28v31H4z" fill="#d9ad76"/><path d="M11 5V2h4l3-2h3l2 2h4v3z" fill="#fff"/><path d="M13 12h15v8h8v20H13z" fill="#dcdcdc" stroke="#3b4453" stroke-width=".5"/><path d="M28 12l8 8h-8z" fill="#fff"/></svg><span class="mt-[6px]">Paste</span><svg class="w-[6px] h-1 mt-[3px]"><use href="#dd"/></svg></button>
          <div class="pt-1 pl-[2px]">
            <button class="flex items-center h-[31px]" aria-label="Cut"><svg class="size-5" viewBox="0 0 20 20"><path d="M0 0h15v9l-5 9H0z" fill="#dcdcdc"/><path d="M2 4h11M2 8h9M2 12h6" stroke="#555" stroke-width="1.300"/><path d="M10 7l8 9M19 7l-8 9" stroke="#fff" stroke-width="1.800"/><circle cx="10" cy="17.500" r="2" fill="none" stroke="#fff" stroke-width="1.300"/><circle cx="17.500" cy="17.500" r="2" fill="none" stroke="#fff" stroke-width="1.300"/></svg></button>
            <button class="flex items-center h-[31px]" aria-label="Copy clip"><svg class="size-5" viewBox="0 0 20 20"><path d="M2 0h9v3H5v12H2z" fill="#dcdcdc"/><path d="M6 4h7v5h5v11H6z" fill="#dcdcdc"/><path d="M14 4l4 4h-4z" fill="#f4f4f4"/></svg></button>
          </div>
        </div>
        <div class="h-5 text-center">Clipboard</div>
      </section>

      <section class="flex-1 flex flex-col">
        <div class="flex flex-1">
          <button class="w-[78px] pt-[13px] flex flex-col items-center justify-start"><svg class="size-10" viewBox="0 0 40 40"><path d="M0 5h17v12h23v18H0z" fill="#d8d8d8"/></svg><span class="mt-[6px]">Base</span><svg class="w-[6px] h-1 mt-[2px]"><use href="#dd"/></svg></button>
        </div>
        <div class="h-5 flex items-center gap-[13px] pl-[6px]"><button class="flex items-center gap-2">View<svg class="w-[9px] h-[5px]"><use href="#dd"/></svg></button><button aria-label="View dialog"><svg class="size-[7px]"><use href="#launch"/></svg></button></div>
      </section>
    </div>

    <!-- Drawing file tabs -->
    <div class="flex items-end h-[33px] pl-[22px]">
      <div class="relative h-[27px] w-[162px] pl-5 pt-px flex items-center text-[#b4b8c1]">
        <svg class="absolute inset-0 w-full h-full" viewBox="0 0 162 27" preserveAspectRatio="none"><path d="M0 27C8 26 8 18 10 10c1-6 4-10 10-10h131c8 0 8 14 11 27z" fill="#2d3441"/></svg>
        <a href="#" class="relative">Start</a>
      </div>
      <div class="relative h-[27px] w-[342px] -ml-[7px] pl-[19px] pt-px flex items-center gap-[11px]">
        <svg class="absolute inset-0 w-full h-full" viewBox="0 0 342 27" preserveAspectRatio="none"><path d="M0 27C6 24 6 16 8 10c1-6 4-10 10-10h306c8 0 9 20 18 27z" fill="#3b4453"/></svg>
        <a href="#" class="relative">2893-0724 -AC-PL- ...N ALI AL SHOWAISH*</a>
        <button class="relative" aria-label="Close tab"><svg class="size-[11px]" viewBox="0 0 14 14"><path d="M1 1l12 12M13 1L1 13" stroke="#a9adb5" stroke-width="3"/></svg></button>
      </div>
      <button class="relative self-center mt-[7px] ml-[6px] w-[25px] h-5 flex items-center justify-center rounded-tl-lg rounded-br-lg bg-[#3b4453]" aria-label="New tab"><svg class="size-[10px]" viewBox="0 0 10 10"><path d="M5 0v10M0 5h10" stroke="#a9adb5" stroke-width="2"/></svg></button>
    </div>
    <div class="h-[5px] bg-[#3b4453] ml-[2px] mr-[3px]"></div>

    <main class="flex flex-1 min-h-0 mr-1">
      <!-- Properties palette -->
      <aside class="w-[425px] pl-[2px] pt-[2px] bg-[#3b4453] flex flex-col shrink-0">
        <h2 class="flex items-center gap-[6px] h-[27px] mr-[3px] pl-[9px] bg-[#2e3440] rounded-t-sm"><svg class="w-1 h-[10px]" viewBox="0 0 4 10"><path d="M.500 0v10M3.500 0v10" stroke="#b9bdc5" stroke-dasharray="1 1"/></svg>PROPERTIES</h2>
        <div class="flex items-center gap-[9px] pl-[22px] pr-4 pt-4">
          <div class="relative flex-1">
            <select aria-label="Selection" class="block w-full h-7 appearance-none bg-[#4d5a6d] border border-[#2a313d] rounded-sm pl-[3px]"><option>No selection</option></select>
            <svg class="absolute right-[5px] top-3 w-[9px] h-[5px]"><use href="#dd"/></svg>
          </div>
          <button aria-label="Toggle PICKADD"><svg class="block size-5" viewBox="0 0 20 20"><path d="M0 2h11v11H0zM7 9h11v11H7z" fill="#86c8f8"/><path d="M7 13V9h4" stroke="#3b4453" fill="none"/><path d="M14 0h3v4h3v2h-3v4h-3V6h-3V4h3z" fill="#5fce84"/></svg></button>
          <button aria-label="Select objects"><svg class="block size-5" viewBox="0 0 20 20"><path d="M1 1h14v11H1z" fill="#6fd69a" stroke="#3b8a5e" stroke-dasharray="2 1"/><svg x="11" y="8" width="8" height="12"><use href="#cur"/></svg></svg></button>
          <button aria-label="Quick select"><svg class="block size-5"><use href="#quick"/></svg></button>
        </div>
        <div class="flex flex-1 min-h-0 pt-[6px] pb-5 pl-[5px] pr-[17px]">
          <div class="w-[5px] h-[491px] mt-px mr-[11px] rounded-full bg-[#272d38]"></div>
          <div class="flex-1 overflow-hidden flex flex-col gap-[3px] text-[#eceef1]">
            <section>
              <button class="w-full flex items-center justify-between h-[27px] pl-[9px] pr-[10px] bg-[#2e3440] font-bold">General<svg class="w-[10px] h-[5px]"><use href="#dd"/></svg></button>
              <table class="ml-[21px] w-[364px] table-fixed border-collapse">
                <tr class="h-[26px] border border-t-0 border-[#2e3440]"><th class="w-[166px] pl-[9px] text-left font-normal text-[#c2c6cd] border-r border-[#2e3440]">Color</th><td class="pl-1"><span class="flex items-center gap-[7px]"><span class="size-[18px] rounded-xs bg-[#991b1e] border border-black"></span>153,27,30</span></td></tr>
                <tr class="h-[26px] border border-[#2e3440]"><th class="pl-[9px] text-left font-normal text-[#c2c6cd] border-r border-[#2e3440]">Layer</th><td class="pl-[2px]">01-AC-REF.PIPES</td></tr>
                <tr class="h-[26px] border border-[#2e3440]"><th class="pl-[9px] text-left font-normal text-[#c2c6cd] border-r border-[#2e3440]">Linetype</th><td class="pl-[5px]"><span class="flex items-center gap-[5px]"><span class="w-20 h-px bg-white"></span>ByBlock</span></td></tr>
                <tr class="h-[26px] border border-[#2e3440]"><th class="pl-[9px] text-left font-normal text-[#c2c6cd] border-r border-[#2e3440]">Linetype scale</th><td class="pl-[2px]">1.0000</td></tr>
                <tr class="h-[26px] border border-[#2e3440]"><th class="pl-[9px] text-left font-normal text-[#c2c6cd] border-r border-[#2e3440]">Lineweight</th><td class="pl-[3px]"><span class="flex items-center gap-[5px]"><span class="w-20 h-px bg-white"></span>ByLayer</span></td></tr>
                <tr class="h-[26px] border border-[#2e3440]"><th class="pl-[9px] text-left font-normal text-[#c2c6cd] border-r border-[#2e3440]">Transparency</th><td class="pl-[2px]">ByLayer</td></tr>
                <tr class="h-[26px] border border-[#2e3440]"><th class="pl-[9px] text-left font-normal text-[#c2c6cd] border-r border-[#2e3440]">Thickness</th><td class="pl-[2px]">0.0000</td></tr>
              </table>
            </section>
            <section>
              <button class="w-full flex items-center justify-between h-[27px] pl-[9px] pr-[10px] bg-[#2e3440] font-bold">3D Visualization<svg class="w-[10px] h-[5px]"><use href="#dd"/></svg></button>
              <table class="ml-[21px] w-[364px] table-fixed border-collapse">
                <tr class="h-[26px] border border-t-0 border-[#2e3440]"><th class="w-[166px] pl-[9px] text-left font-normal text-[#c2c6cd] border-r border-[#2e3440]">Material</th><td class="pl-[2px]">ByLayer</td></tr>
              </table>
            </section>
            <section>
              <button class="w-full flex items-center justify-between h-[27px] pl-[9px] pr-[10px] bg-[#2e3440] font-bold">Plot style<svg class="w-[10px] h-[5px]"><use href="#dd"/></svg></button>
              <table class="ml-[21px] w-[364px] table-fixed border-collapse">
                <tr class="h-[26px] border border-t-0 border-[#2e3440]"><th class="w-[166px] pl-[9px] text-left font-normal text-[#c2c6cd] border-r border-[#2e3440]">Plot style</th><td class="pl-[2px] text-[#8d939e]">ByColor</td></tr>
                <tr class="h-[26px] border border-[#2e3440]"><th class="pl-[9px] text-left font-normal text-[#c2c6cd] border-r border-[#2e3440]">Plot style table</th><td class="pl-[2px]">None</td></tr>
                <tr class="h-[26px] border border-[#2e3440]"><th class="pl-[9px] text-left font-normal text-[#c2c6cd] border-r border-[#2e3440]">Plot table attached to</th><td class="pl-[2px] text-[#8d939e]">Model</td></tr>
                <tr class="h-[26px] border border-[#2e3440]"><th class="pl-[9px] text-left font-normal text-[#c2c6cd] border-r border-[#2e3440]">Plot table type</th><td class="pl-[2px] text-[#8d939e]">Not available</td></tr>
              </table>
            </section>
            <section>
              <button class="w-full flex items-center justify-between h-[27px] pl-[9px] pr-[10px] bg-[#2e3440] font-bold">View<svg class="w-[10px] h-[5px]"><use href="#dd"/></svg></button>
              <table class="ml-[21px] w-[364px] table-fixed border-collapse">
                <tr class="h-[26px] border border-t-0 border-[#2e3440]"><th class="w-[166px] pl-[9px] text-left font-normal text-[#c2c6cd] border-r border-[#2e3440]">Center X</th><td class="pl-[2px] text-[#8d939e]">320007.4379</td></tr>
                <tr class="h-[26px] border border-[#2e3440]"><th class="pl-[9px] text-left font-normal text-[#c2c6cd] border-r border-[#2e3440]">Center Y</th><td class="pl-[2px] text-[#8d939e]">53213.1637</td></tr>
                <tr class="h-[26px] border border-[#2e3440]"><th class="pl-[9px] text-left font-normal text-[#c2c6cd] border-r border-[#2e3440]">Center Z</th><td class="pl-[2px] text-[#8d939e]">0.0000</td></tr>
                <tr class="h-[26px] border border-[#2e3440]"><th class="pl-[9px] text-left font-normal text-[#c2c6cd] border-r border-[#2e3440]">Height</th><td class="pl-[2px] text-[#8d939e]">417203.5835</td></tr>
                <tr class="h-[26px] border border-[#2e3440]"><th class="pl-[9px] text-left font-normal text-[#c2c6cd] border-r border-[#2e3440]">Width</th><td class="pl-[2px] text-[#8d939e]">835283.6450</td></tr>
              </table>
            </section>
            <section>
              <button class="w-full flex items-center justify-between h-[27px] pl-[9px] pr-[10px] bg-[#2e3440] font-bold">Misc<svg class="w-[10px] h-[5px]"><use href="#dd"/></svg></button>
              <table class="ml-[21px] w-[364px] table-fixed border-collapse">
                <tr class="h-[26px] border border-t-0 border-[#2e3440]"><th class="w-[166px] pl-[9px] text-left font-normal text-[#c2c6cd] border-r border-[#2e3440]">Annotation scale</th><td class="pl-[2px]">1:1</td></tr>
              </table>
            </section>
          </div>
        </div>
      </aside>

      <!-- Model space -->
      <div class="relative flex-1 bg-black overflow-hidden">
        <svg id="model" class="absolute left-0 top-0 w-[1484px] h-[708px]" viewBox="430 247 1484 708" shape-rendering="crispEdges"></svg>

        <svg class="absolute right-[14px] top-[15px] w-[138px] h-[144px]" viewBox="1762 262 138 144">
          <circle cx="1831" cy="329" r="53.500" fill="none" stroke="#272727" stroke-width="13"/>
          <path d="M1805 303h52v52h-52z" fill="#a9a9a9"/><path d="M1815 313h32v32h-32z" fill="#999ca5"/>
          <g font-family="Liberation Sans, sans-serif" font-weight="bold" font-size="22" fill="#a6a6a6" text-anchor="middle">
            <text x="1831" y="281">N</text><text x="1831" y="394">S</text><text x="1775" y="337">W</text><text x="1887" y="337">E</text>
            <text x="1831" y="334" font-size="13" fill="#4b4d52">TOP</text>
          </g>
        </svg>
        <button class="absolute right-[56px] top-[169px] w-14 h-[21px] flex items-center gap-1 pl-1 rounded-md bg-[#8e8f98] border border-[#6c6d74] text-[#4b4d55] text-[13px] font-['Liberation_Sans',sans-serif]">WCS<svg class="w-[10px] h-[6px] ml-[3px]" viewBox="0 0 10 6"><path d="M.500.500h9l-4.500 5z" fill="none" stroke="#b9bac2"/></svg></button>

        <div class="absolute right-1 top-[221px] w-10">
          <svg class="block w-10 h-[259px]" viewBox="0 0 40 259" fill="none" stroke="#272727" stroke-width="1.500">
            <rect width="40" height="259" rx="3" fill="#414141" stroke="none"/>
            <circle cx="33" cy="7" r="4"/><path d="M31 5l4 4M35 5l-4 4"/>
            <path d="M34 34c0-9-2-13-14-13C10 21 6 28 6 35c0 9 7 14 14 14s14-6 14-15z"/><circle cx="20" cy="35" r="7"/><circle cx="20" cy="35" r="5"/><path d="M15 41l-4 5M25 41l4 5"/>
            <path d="M17 61h6l-3 4z" fill="#272727"/><path d="M3 69h34" stroke="#555"/>
            <path d="M14 102l-8-10c-2-3 1-5 3-3l5 5-4-14c0-3 3-3 4 0l3 10-1-14c0-3 4-3 4 0l1 14 2-13c1-2 4-2 4 1l-1 13 3-8c2-2 4-1 3 2l-5 15-4 3z"/>
            <path d="M6 110l18 20M24 110L6 130M6 116v-6h6M18 110h6v6M6 124v6h6"/><circle cx="25" cy="128" r="7"/><path d="M30 133l5 5" stroke-width="3"/>
            <path d="M17 148h6l-3 4z" fill="#272727"/>
            <path d="M18 184v-20h-3l5-8 5 8h-3v20z"/><path d="M33 173c0 4-6 7-14 7l-6 0M9 166c-6 5-2 10 6 11M13 176l-5 4 5 4"/>
            <path d="M17 195h6l-3 4z" fill="#272727"/><path d="M3 203h34" stroke="#555"/>
            <path d="M5 208h7v8H5zM15 208h7v8h-7zM25 208h7v8h-7zM5 219h20v17H5z"/><path d="M11 223l8 5-8 5z" fill="#272727"/>
            <circle cx="33" cy="252" r="4"/><path d="M30 252h6"/>
          </svg>
        </div>

        <!-- Command line -->
        <div class="absolute bottom-0 left-[369px] w-[745px] h-[34px] flex items-stretch bg-[#1f242e] rounded-t-sm">
          <svg class="ml-[5px] mt-[6px] w-[6px] h-[22px]" viewBox="0 0 6 22"><path d="M1 0v22M5 0v22" stroke="#b9bdc5" stroke-width="1.500" stroke-dasharray="2 2"/></svg>
          <button class="ml-[7px] self-center" aria-label="Close command line"><svg class="size-3" viewBox="0 0 14 14"><path d="M1 1l12 12M13 1L1 13" stroke="#b9bdc5" stroke-width="2.500"/></svg></button>
          <button class="ml-[14px] mr-[6px] self-center" aria-label="Customize"><svg class="size-5" viewBox="0 0 20 20"><path d="M2 18L11 9" stroke="#b9bdc5" stroke-width="3.500" stroke-linecap="round"/><path d="M10 7c0-4 3-7 7-6l-3 3 2 2 3-3c1 4-2 7-6 7z" fill="#b9bdc5"/></svg></button>
          <div class="flex-1 flex items-center my-px bg-[#b4b4b4] rounded-r-sm">
            <svg class="ml-[5px] w-5 h-4" viewBox="0 0 20 16"><path d="M.500.500h19v15H.500z" fill="#b4b4b4" stroke="#444"/><path d="M0 0h20v4H0z" fill="#444"/><path d="M3 7l3 2-3 2M7 11h4" stroke="#444" fill="none"/></svg>
            <svg class="ml-[2px] w-[10px] h-[6px]" viewBox="0 0 10 6"><path d="M0 0h10L5 6z" fill="#333"/></svg>
            <input type="text" aria-label="Command" placeholder="Type a command" class="flex-1 ml-[9px] h-8 text-[15px] italic font-['DejaVu_Sans_Mono',monospace] placeholder:text-[#555]" />
            <svg class="mr-[7px] w-[9px] h-[5px]" viewBox="0 0 10 6"><path d="M0 6h10L5 0z" fill="#444"/></svg>
          </div>
        </div>
      </div>
    </main>

    <!-- Layout tabs -->
    <nav class="relative flex h-[23px] ml-1 border-t border-[#39414f] leading-[22px]">
      <a href="#" class="w-[85px] pl-3 text-center font-bold bg-[#222933]">Model</a>
      <a href="#" class="w-[108px] text-center bg-[#3b4453] rounded-b-xl border-x-2 border-[#222933]">SEPARATOR</a>
      <a href="#" class="w-[113px] text-center bg-[#3b4453] rounded-b-xl border-x-2 border-[#222933]">P1-GN-PI-PS</a>
      <a href="#" class="w-[93px] text-center bg-[#3b4453] rounded-b-xl border-x-2 border-[#222933]">P2-PS-SD</a>
      <a href="#" class="w-[89px] text-center bg-[#3b4453] rounded-b-xl border-x-2 border-[#222933]">P3-PFISD</a>
      <a href="#" class="w-[91px] text-center bg-[#3b4453] rounded-b-xl border-x-2 border-[#222933]">P4-GFSLP</a>
      <a href="#" class="w-[88px] text-center bg-[#3b4453] rounded-b-xl border-x-2 border-[#222933]">P5-FFSLP</a>
      <a href="#" class="w-[114px] text-center bg-[#3b4453] rounded-b-xl border-x-2 border-[#222933]">P6-LRD&amp;SLP</a>
      <a href="#" class="w-[107px] text-center bg-[#3b4453] rounded-b-xl border-x-2 border-[#222933]">P7-URD-SLL</a>
      <a href="#" class="w-[99px] text-center bg-[#3b4453] rounded-b-xl border-x-2 border-[#222933]">P8-GFWLL</a>
      <a href="#" class="w-[97px] text-center bg-[#3b4453] rounded-b-xl border-x-2 border-[#222933]">P9-FF-WLL</a>
      <a href="#" class="w-[122px] text-center bg-[#3b4453] rounded-b-xl border-x-2 border-[#222933]">P10-LRD-WLL</a>
      <a href="#" class="w-[122px] text-center bg-[#3b4453] rounded-b-xl border-x-2 border-[#222933]">P11-URD-WLL</a>
      <a href="#" class="w-[175px] text-center bg-[#3b4453] rounded-b-xl border-x-2 border-[#222933]">AC-P12-GF-S-ACU-DL</a>
      <a href="#" class="w-[188px] text-center bg-[#3b4453] rounded-b-xl border-x-2 border-[#222933]">AC-P13-FF-SD-ACU-DL</a>
      <button class="ml-[10px] w-7 bg-[#3b4453] rounded-b-xl" aria-label="New layout">+</button>
      <span class="flex-1"></span>
      <button class="w-[26px] mr-2 flex items-center justify-center bg-[#2e3440]" aria-label="Scroll layouts"><svg class="w-[10px] h-[14px]" viewBox="0 0 10 14"><path d="M0 1h10L5 6zM0 8h10L5 13z" fill="#a9adb5"/></svg></button>
    </nav>

    <!-- Status bar -->
    <div class="flex h-10 pt-1 pb-[6px] justify-end gap-[3px] pr-[6px]">
      <button class="w-[59px] bg-[#3b4453]">MODEL</button>
      <div class="w-20 flex items-center bg-[#3b4453]">
        <button class="w-[31px] flex justify-center" aria-label="Grid"><svg class="size-5" viewBox="0 0 20 20"><path d="M5 0v20M10 0v20M15 0v20M0 5h20M0 10h20M0 15h20" stroke="#dcdcdc" stroke-width="1.200"/></svg></button>
        <button class="w-7 h-full flex items-center justify-center bg-[#5f8fc4]" aria-label="Snap"><svg class="size-4" viewBox="0 0 16 16"><path d="M1 2h14M1 8h14M1 14h14" stroke="#fff" stroke-width="3" stroke-dasharray="3 2.500"/></svg></button>
        <button class="w-[21px] flex justify-center" aria-label="Snap settings"><svg class="w-[10px] h-[6px]"><use href="#dd"/></svg></button>
      </div>
      <div class="w-[130px] flex items-center bg-[#3b4453]">
        <button class="w-[31px] flex justify-center" aria-label="Ortho"><svg class="size-5" viewBox="0 0 20 20"><path d="M1 0v19h19M1 13h6v6" fill="none" stroke="#dcdcdc" stroke-width="1.300"/></svg></button>
        <button class="w-7 h-full flex items-center justify-center bg-[#5f8fc4]" aria-label="Polar"><svg class="size-5" viewBox="0 0 20 20"><circle cx="9" cy="11" r="7.500" fill="none" stroke="#fff" stroke-width="1.300"/><path d="M9 11h11M9 11l8-10M14 8c2 1 2 3 2 5" fill="none" stroke="#fff" stroke-width="1.300"/></svg></button>
        <button class="w-[22px] flex justify-center" aria-label="Polar settings"><svg class="w-[10px] h-[6px]"><use href="#dd"/></svg></button>
        <button class="ml-[2px] w-6 flex justify-center" aria-label="Isometric"><svg class="size-5" viewBox="0 0 20 20"><path d="M4 3l13 14" stroke="#c9696f"/><path d="M11 1v18" stroke="#69b98a"/><path d="M9 8h4v4H9z" fill="none" stroke="#dcdcdc"/></svg></button>
        <button class="w-[23px] flex justify-center" aria-label="Isometric settings"><svg class="w-[10px] h-[6px]"><use href="#dd"/></svg></button>
      </div>
      <div class="w-[81px] flex items-center bg-[#3b4453] -ml-[2px]">
        <button class="w-[31px] flex justify-center" aria-label="Tracking"><svg class="size-5" viewBox="0 0 20 20"><path d="M17 3L1 17h19" fill="none" stroke="#dcdcdc" stroke-width="1.200"/><path d="M5 11l5 2-3 3z" fill="#dcdcdc"/></svg></button>
        <button class="w-7 h-full flex items-center justify-center bg-[#5f8fc4]" aria-label="Object snap"><svg class="size-5" viewBox="0 0 20 20"><path d="M5 3h14v16H3V5" fill="none" stroke="#fff" stroke-width="1.300"/><path d="M1 1h5v5H1z" fill="#5f8fc4" stroke="#fff" stroke-width="1.300"/></svg></button>
        <button class="w-[22px] flex justify-center" aria-label="Object snap settings"><svg class="w-[10px] h-[6px]"><use href="#dd"/></svg></button>
      </div>
      <div class="w-[132px] flex items-center gap-[2px] bg-[#3b4453]">
        <button class="w-7 h-full flex items-center justify-center bg-[#5f8fc4]" aria-label="Annotation visibility"><svg class="size-[22px]" viewBox="0 0 24 24"><use href="#arrowA"/><circle cx="19" cy="6" r="3.500" fill="none" stroke="#fff" stroke-width="1.300"/></svg></button>
        <button class="w-7 h-full flex items-center justify-center bg-[#5f8fc4]" aria-label="Auto scale"><svg class="size-[22px]" viewBox="0 0 24 24"><use href="#arrowA"/><path d="M20 1l-4 6h3l-1 5 5-7h-3z" fill="#fff"/></svg></button>
        <button class="w-7 flex justify-center" aria-label="Annotation scale icon"><svg class="size-[22px]"><use href="#arrowA"/></svg></button>
        <button class="flex items-center gap-1 pl-1">1:1<svg class="w-[10px] h-[6px]"><use href="#dd"/></svg></button>
      </div>
      <div class="w-12 flex items-center bg-[#3b4453]">
        <button class="w-[29px] flex justify-center" aria-label="Workspace"><svg class="size-5" viewBox="0 0 20 20"><circle cx="10" cy="10" r="5" fill="none" stroke="#e2e3e5" stroke-width="4"/><path d="M10 0v4M10 16v4M0 10h4M16 10h4M3 3l3 3M14 14l3 3M17 3l-3 3M6 14l-3 3" stroke="#e2e3e5" stroke-width="3.500"/></svg></button>
        <button class="w-[19px] flex justify-center" aria-label="Workspace list"><svg class="w-[9px] h-[6px]"><use href="#dd"/></svg></button>
      </div>
      <button class="w-[30px] flex items-center justify-center bg-[#3b4453]" aria-label="Monitor"><svg class="size-[18px]" viewBox="0 0 18 18"><path d="M9 0v18M0 9h18" stroke="#e4e6ea" stroke-width="2.400"/></svg></button>
      <button class="w-[30px] flex items-center justify-center bg-[#3b4453]" aria-label="Isolate objects"><svg class="size-5" viewBox="0 0 20 20"><path d="M1 1h7v7H1zM8 12l5 7H4z" fill="none" stroke="#dcdcdc" stroke-width="1.200"/><circle cx="15" cy="9" r="4" fill="none" stroke="#dcdcdc" stroke-width="1.200"/></svg></button>
      <div class="w-[68px] flex items-center bg-[#3b4453]">
        <button class="pl-1" aria-label="Drawing units"><svg class="w-6 h-[26px]" viewBox="0 0 24 26"><circle cx="12" cy="10" r="9" fill="#2f63b0"/><path d="M0 2h12M2 0v12M0 10l10-8" stroke="#9fc4ee" stroke-width="1.600"/><path d="M0 14h8v10H0z" fill="#f6c244"/><path d="M9 19l5 5 9-10" stroke="#5cb860" stroke-width="3.500" fill="none"/></svg></button>
        <button class="pl-[9px]" aria-label="Plot job status"><svg class="size-5" viewBox="0 0 20 20"><path d="M3 2h11v5H3zM0 7h17v7H0z" fill="none" stroke="#dcdcdc" stroke-width="1.300"/><path d="M4 11h9v6H4z" fill="#dcdcdc"/><path d="M14 8l6 12H8z" fill="#f0a070"/><path d="M14 12v4M14 17v2" stroke="#fff" stroke-width="1.500"/></svg></button>
      </div>
      <div class="w-[60px] flex items-center justify-around bg-[#3b4453]">
        <button aria-label="Clean screen"><svg class="w-5 h-4" viewBox="0 0 20 16"><path d="M.500.500h19v15H.500z" fill="none" stroke="#dcdcdc"/><path d="M12 3h5v4zM3 9v4h5z" fill="#dcdcdc"/><path d="M11 8l4-4M9 8l-4 4" stroke="#dcdcdc"/></svg></button>
        <button aria-label="Customization"><svg class="w-5 h-[18px]" viewBox="0 0 20 18"><path d="M0 1h20M0 9h20M0 17h20" stroke="#e4e6ea" stroke-width="2"/></svg></button>
      </div>
    </div>

    <!-- Plot notification -->
    <div role="status" class="absolute right-[19px] bottom-[49px] w-[315px] h-[104px] px-[11px] pt-[13px] bg-[#ffffe1] text-black rounded-[20px] border-b border-black">
      <div class="flex items-center">
        <svg class="w-5 h-[18px]" viewBox="0 0 20 18"><path d="M10 0l10 17H0z" fill="#f2c31c" stroke="#a8861c"/><path d="M9 5h2.500l-.500 6H9.500zM9 13h2.500v2H9z" fill="#222"/></svg>
        <strong class="flex-1 ml-[13px]">Plot and Publish Job Complete</strong>
        <button class="size-5 flex items-center justify-center bg-[#f0f0f0] border border-[#999]" aria-label="Dismiss"><svg class="size-[11px]" viewBox="0 0 14 14"><path d="M1 1l12 12M13 1L1 13" stroke="#000" stroke-width="2.500"/></svg></button>
      </div>
      <p class="mt-2 ml-[7px]">Errors and warnings found</p>
      <p class="mt-2 ml-[7px]"><a href="#" class="underline text-[#1a1aa6]">Click to view plot and publish details...</a></p>
      <svg class="absolute left-[218px] -bottom-[25px] w-7 h-[26px]" viewBox="0 0 28 26"><path d="M1 0l23 24V0z" fill="#ffffe1"/><path d="M1 1l23 24V0" fill="none" stroke="#000"/></svg>
    </div>
  </div>

  <!-- Windows taskbar -->
  <footer class="relative flex items-center h-[61px] pt-px shrink-0 bg-linear-to-r from-[#efdff3] via-[#fae6e8] to-[#ead6d6] text-[#222]">
    <button class="ml-[27px]" aria-label="Widgets"><svg class="w-[29px] h-[27px]" viewBox="0 0 29 27"><rect width="29" height="27" rx="4" fill="#1274c4"/><rect x="2" y="2" width="13" height="23" rx="2" fill="#f3f8fc"/><rect x="17" y="2" width="10" height="12" rx="1" fill="#7cc4f4"/><rect x="17" y="16" width="10" height="9" rx="1" fill="#2b9be6"/></svg></button>
    <button class="ml-[611px]" aria-label="Start"><svg class="size-[29px]" viewBox="0 0 29 29"><path d="M0 0h14v14H0zM15 0h14v14H15zM0 15h14v14H0zM15 15h14v14H15z" fill="#1473cc"/></svg></button>
    <label class="ml-[17px] w-[273px] h-10 flex items-center gap-[11px] pl-[14px] rounded-full bg-[#fcf5f8] border border-[#e2d0d8]">
      <svg class="size-[19px]" viewBox="0 0 20 20"><circle cx="11" cy="8" r="6.500" fill="none" stroke="#222" stroke-width="2"/><path d="M6 13l-5 6" stroke="#222" stroke-width="2.400"/></svg>
      <input type="text" aria-label="Search" placeholder="Search" class="w-[200px] text-[16px] placeholder:text-[#555]" />
    </label>
    <button class="ml-4" aria-label="Task view"><svg class="w-[31px] h-7" viewBox="0 0 31 28"><path d="M0 7h23v20H0z" fill="#1e1e1e"/><path d="M9 0h21v18H9z" fill="#e9e3e3" fill-opacity=".9"/><path d="M4 10h14v10H4z" fill="#8b8888" fill-opacity=".8"/></svg></button>
    <button class="ml-[27px]" aria-label="Calculator"><svg class="w-6 h-[30px]" viewBox="0 0 24 30"><rect width="24" height="30" rx="2" fill="#5f7182"/><path d="M3 3h18v6H3z" fill="#45c0ec"/><path d="M3 11h5v5H3zM9 11h5v5H9zM16 11h5v5h-5zM3 17h5v4H3zM9 17h5v4H9zM3 22h5v5H3zM9 22h5v5H9z" fill="#d9e4ee"/><path d="M16 17h5v10h-5z" fill="#13509c"/></svg></button>
    <button class="ml-[33px]" aria-label="Transfer"><svg class="w-[22px] h-5" viewBox="0 0 22 20"><path d="M6 5h16M0 15h16" stroke="#000" stroke-width="2.200"/><path d="M0 5l8-5-2 5 2 5zM22 15l-8-5 2 5-2 5z" fill="#000"/></svg></button>
    <button class="relative ml-[29px]" aria-label="File Explorer"><svg class="w-[30px] h-7" viewBox="0 0 30 28"><path d="M0 3a2 2 0 0 1 2-2h8l3 3h15a2 2 0 0 1 2 2v3H0z" fill="#d99b1c"/><rect y="6" width="30" height="21" rx="2" fill="#fcce3e"/><path d="M5 27v-5a3 3 0 0 1 3-3h14a3 3 0 0 1 3 3v5z" fill="#1d74c0"/><path d="M10 23h10" stroke="#0d4b8a" stroke-width="2"/></svg><span class="absolute left-[11px] top-[35px] w-2 h-1 rounded-full bg-[#857f80]"></span></button>
    <button class="relative ml-[25px] size-[30px] flex items-center justify-center bg-[#fbeeea]" aria-label="AutoCAD"><svg class="w-[22px] h-[26px]"><use href="#acad"/></svg><span class="absolute left-[11px] top-[36px] w-2 h-1 rounded-full bg-[#857f80]"></span></button>
    <div class="ml-auto flex items-center pr-6">
      <button aria-label="Hidden icons"><svg class="w-[14px] h-2" viewBox="0 0 14 8"><path d="M1 7l6-6 6 6" fill="none" stroke="#222" stroke-width="1.800"/></svg></button>
      <button class="ml-[23px]" aria-label="Cloud"><svg class="w-5 h-[18px]" viewBox="0 0 20 18"><path d="M5 13a4 4 0 0 1 0-8 6 6 0 0 1 11 1 4 4 0 0 1 1 7z" fill="#9a9a9a" stroke="#333" stroke-width="1.400"/><circle cx="14" cy="13" r="5" fill="#fff"/><path d="M11 13a3 3 0 0 1 5.500-1.500M17 13a3 3 0 0 1-5.500 1.500" fill="none" stroke="#1a78c8" stroke-width="1.500"/></svg></button>
      <span class="ml-6">ENG</span>
      <button class="ml-[22px]" aria-label="Network"><svg class="size-5" viewBox="0 0 20 20"><circle cx="9" cy="9" r="8" fill="none" stroke="#222" stroke-width="1.400"/><path d="M1 7h16M1 12h10M9 1c-5 5-5 11 0 16M9 1c3 3 4 5 4 8" fill="none" stroke="#222" stroke-width="1.200"/><circle cx="15" cy="15" r="4.500" fill="#ead6d6" stroke="#222" stroke-width="1.400"/><path d="M12 18l6-6" stroke="#222" stroke-width="1.300"/></svg></button>
      <button class="ml-[10px]" aria-label="Volume"><svg class="w-5 h-4" viewBox="0 0 20 16"><path d="M1 5h3l5-4v14l-5-4H1zM12 5c1.500 2 1.500 4 0 6M14.500 3c3 3 3 7 0 10M17 1c4 4 4 10 0 14" fill="none" stroke="#222" stroke-width="1.400"/></svg></button>
      <button class="ml-[10px]" aria-label="Battery"><svg class="w-5 h-[13px]" viewBox="0 0 20 13"><rect x=".7" y=".7" width="15.600" height="11.600" rx="2.500" fill="none" stroke="#222" stroke-width="1.400"/><path d="M3 3h8v7H3zM17.500 4h2v5h-2z" fill="#222"/></svg></button>
      <p class="w-[90px] text-right leading-5">1:49 PM<br>4/27/2025</p>
    </div>
    <div dir="rtl" class="absolute left-[850px] -top-[29px] w-[225px] text-center text-[64px] leading-[90px] font-bold text-[#9c959c]/35 pointer-events-none font-['DejaVu_Sans',sans-serif]">خمسات</div>
  </footer>

  <script>
    const shapes = [];
    let seed = 11;
    const rnd = () => (seed = (seed * 16807) % 2147483647) / 2147483647;
    const pick = list => list[Math.floor(rnd() * list.length)];
    const box = (x, y, w, h, c) => shapes.push(`<rect x="${x}" y="${y}" width="${w}" height="${h}" fill="${c}"/>`);
    const path = (d, c, w = 1) => shapes.push(`<path d="${d}" fill="none" stroke="${c}" stroke-width="${w}"/>`);
    const specks = (x, y, w, h, n, colors, max = 4) => {
      for (let i = 0; i < n; i++) {
        box(x + Math.floor(rnd() * (w - 1)), y + Math.floor(rnd() * (h - 1)), 1 + Math.floor(rnd() * max), 1 + Math.floor(rnd() * 2), pick(colors));
      }
    };

    // sheet labels
    const label = (x, y, t) => shapes.push(`<text x="${x}" y="${y}" fill="#fff" font-size="21" font-family="Liberation Sans, sans-serif">${t}</text>`);
    label(662, 365, 'DR LAYOUT');
    label(984, 367, 'WS LAYOUT');
    label(1304, 367, 'AC LAYOUT');
    label(1609, 367, 'FIRE FIGHT');

    // roof and upper floor plans
    function roof(x, y) {
      path(`M${x + .5} ${y + .5}h40v36h-30l-10-11z`, '#c0c0c0');
      path(`M${x + 10} ${y + 36}h30`, '#c0c0c0', 2);
      shapes.push(`<path d="M${x + 7} ${y + 3}h30v31h-23v-3h-6v-9h-1z" fill="#c0c0c0"/>`);
    }
    [[696, 515], [1360, 515], [1624, 515]].forEach(([x, y]) => {
      roof(x, y);
      box(x + 18, y + 19, 5, 1, '#777');
      box(x + 30, y + 14, 6, 1, '#8a8ad0');
      box(x + 31, y + 16, 5, 7, '#1212b8');
      box(x + 31, y + 18, 4, 1, '#8fb0e8');
      box(x + 29, y + 17, 2, 4, '#8fb0e8');
    });
    roof(1029, 499);
    box(1047, 518, 4, 1, '#777'); box(1057, 514, 3, 7, '#2ed13a'); box(1060, 514, 5, 7, '#1212b8');
    roof(696, 575); roof(1029, 560); roof(1360, 575); roof(1624, 575);
    [[707, 578], [717, 578], [728, 578]].forEach(([x, y]) => box(x, y, 4, 2, '#74d7e0'));
    box(720, 593, 4, 1, '#7fe0c0');
    [725, 1389, 1652].forEach(x => { box(x, 592, 2, 5, '#000'); box(x + 2, 590, 2, 3, '#000'); box(x + 2, 595, 2, 2, '#000'); });
    path('M1065 566v22M1065 573h-8v11h8', '#8be01a', 2);
    specks(1059, 575, 5, 7, 6, ['#000', '#888'], 2);
    [[1373, 579], [1386, 579], [1372, 603], [1386, 606], [1387, 595]].forEach(([x, y]) => { box(x, y, 4, 4, '#9a5a5e'); box(x + 1, y - 1, 2, 3, '#d01828'); });
    box(1394, 585, 4, 1, '#555'); box(1393, 604, 4, 1, '#555');

    // typical floor plans
    function rooms(x, y, colors, n) {
      path(`M${x + .5} ${y + .5}h40v36h-29l-11-10z`, '#5c5c5c');
      path(`M${x + 8} ${y + 4}h30v30h-24v-4h-6zM${x + 15} ${y + 4}v30M${x + 22} ${y + 10}v22M${x + 31} ${y + 4}v30M${x + 8} ${y + 12}h30M${x + 8} ${y + 21}h30M${x + 14} ${y + 28}h24M${x + 25} ${y + 4}v8`, '#c0c0c0');
      path(`M${x + 8} ${y + 4.5}h30v29h-23`, '#c0c0c0', 2);
      specks(x + 11, y + 8, 24, 22, n, colors, 4);
      box(x + 33, y + 18, 4, 4, '#2fa04a');
    }
    rooms(776, 575, ['#d0206a', '#e8308a', '#2f9a3a', '#000', '#d07020', '#c0c0c0', '#d0206a'], 75);
    box(787, 577, 4, 3, '#8ab8f0'); box(799, 577, 4, 3, '#8ab8f0'); box(810, 577, 4, 3, '#8ab8f0');
    rooms(1109, 560, ['#ffe01a', '#ffe01a', '#e08020', '#2f9a3a', '#c03020'], 60);
    specks(1124, 573, 14, 10, 30, ['#ffe01a', '#f0a020'], 4);
    box(1126, 577, 12, 3, '#ffe01a');
    rooms(1440, 575, ['#d01838', '#e87030', '#f0a060', '#c0c0c0', '#2f9a3a', '#d01838'], 75);
    rooms(1705, 575, ['#3030d0', '#000', '#c0c0c0', '#d05030', '#000'], 36);

    // ground floor plans with the street side wall
    function ground(x, y, colors, n) {
      box(x + 3, y + 4, 9, 32, '#c0c0c0');
      path(`M${x} ${y + 5}v-4h4v4M${x + 1} ${y + 34}l1 6l5 3h40M${x + 4} ${y + 34}l7 7h36v3M${x + 8} ${y + 4}h36v34M${x + 14} ${y + 7}v30h30M${x + 15} ${y + 8}h24M${x + 15} ${y + 17}h17v5h8M${x + 15} ${y + 26}h25`, '#c0c0c0');
      path(`M${x + 9} ${y + 4.5}h35M${x + 13} ${y + 35}h28M${x + 14} ${y + 8}v28`, '#c0c0c0', 2);
      path(`M${x + 9} ${y + 6}v28`, '#444');
      box(x + 31, y + 19, 9, 8, '#c0c0c0');
      box(x + 18, y + 37, 16, 5, '#b0a8a8');
      box(x + 34, y + 35, 10, 5, '#d81818');
      specks(x + 5, y + 8, 6, 26, 12, ['#222', '#777'], 2);
      specks(x + 14, y + 6, 28, 30, n, colors, 3);
    }
    ground(692, 633, ['#d0206a', '#e8308a', '#8a8ad0', '#2f9a3a'], 24);
    path('M700 638.500h34M733.500 639v30M722 657h12', '#e8308a');
    ground(1025, 618, ['#2f9a3a', '#c0c0c0', '#000'], 16);
    [[1061, 624], [1052, 638], [1060, 648]].forEach(([x, y]) => { box(x, y, 6, 4, '#ffd21a'); box(x + 2, y + 2, 2, 4, '#f0a020'); });
    path('M1066.500 643v12', '#2a50d0');
    ground(1356, 633, ['#d0206a', '#c03020', '#2f9a3a', '#3030d0'], 36);
    path('M1372 643.500h24M1372 664.500h24M1378.500 643v8M1385.500 650v15M1393.500 655v10', '#ffe01a');
    ground(1621, 633, ['#c0c0c0', '#8a8ad0'], 8);

    // schedules
    function schedule(x, y, w, h, cols, rows) {
      box(x, y, w, h, '#120012');
      for (let i = 1; i < rows; i++) {
        const ry = y + Math.round(i * h / rows);
        box(x, ry, w, 1, i % 2 ? '#a9b9ad' : '#8a5f90');
        specks(x + 2, ry - 1, w - 8, 2, Math.round(w / 9), ['#86efc0', '#dcd8e8', '#6fb08a'], 5);
      }
      for (let i = 0; i <= cols; i++) box(x + Math.round(i * (w - 1) / cols), y, 1, h, '#d426d4');
      path(`M${x + .5} ${y + .5}h${w - 1}v${h - 1}h-${w - 1}zM${x} ${y + 4.5}h${w}`, '#d426d4');
      box(x, y - 2, Math.round(w / 4), 1, '#b9e0d0');
      box(x + w - 7, y + h - 1, 7, 3, '#d426d4');
    }
    schedule(1169, 525, 54, 8, 8, 2);
    schedule(1168, 543, 54, 11, 9, 3); box(1171, 553, 25, 5, '#86efc0');
    schedule(1167, 569, 55, 27, 13, 9); box(1170, 596, 10, 3, '#86efc0');
    [575, 579, 583, 587].forEach(y => box(1204, y, 8, 2, '#86bfa0'));
    schedule(1165, 632, 55, 17, 13, 5); box(1169, 649, 9, 2, '#86efc0');
    schedule(1508, 579, 68, 35, 19, 12);
    schedule(1506, 645, 66, 18, 18, 6);
    box(1526, 578, 6, 3, '#a8e0e8'); box(1548, 578, 6, 3, '#a8e0e8'); box(1546, 644, 6, 3, '#a8e0e8');

    // level marks and UCS icon
    box(654, 480, 22, 2, '#fff'); box(654, 531, 22, 2, '#fff'); box(654, 592, 22, 2, '#fff');
    box(654, 659, 19, 2, '#fff'); box(675, 652, 6, 2, '#fff');
    path('M629.500 629v62.500h63M624.500 685.500h11v11h-11zM631 610l7.500 7.500l7.500-7.500M638.500 617v8M696 676l15 15M711 676l-15 15', '#fff');

    // detail blocks
    function detail(x, y, w, h, colors, n) {
      for (let i = 2; i < h - 3; i += 2) box(x + Math.floor(rnd() * 5), y + i, Math.floor(w * (.4 + rnd() * .4)), 1, rnd() > .4 ? '#b01010' : '#555');
      specks(x + w * .35, y, w * .4, h - 4, n, colors, 4);
      box(x, y + h - 1, w, 1, '#c01414');
    }
    specks(522, 757, 5, 40, 30, ['#22e022', '#b9c9bd', '#c02080', '#22b022'], 3);
    [758, 766, 773, 782, 794].forEach(y => box(525, y, 6, 3, '#22e022'));
    path('M542.500 755.500h55v35h-55zM562.500 755v35', '#b01c14');
    [758, 763, 764, 765, 771, 772, 773, 774, 780, 782, 786].forEach(y => box(545, y, 12 + y % 3, 1, '#c01414'));
    for (let y = 758; y < 788; y += 3) box(565, y, 30, 1, '#7a7a7a');
    specks(571, 768, 18, 16, 50, ['#6a7a50', '#9aa03a', '#38d8e0'], 5);
    specks(576, 760, 6, 24, 50, ['#38d8e0', '#38d8e0', '#4ab0b8'], 3);
    box(573, 788, 15, 1, '#fff');
    specks(639, 764, 8, 15, 60, ['#38d8e0', '#8ab8b8', '#38d8e0'], 4);
    box(634, 781, 6, 1, '#c01414'); box(638, 783, 12, 1, '#d426a4'); box(646, 763, 5, 1, '#c01414');
    box(654, 768, 10, 13, '#a8dce0'); path('M654 772.500h10M654 776.500h10M659 768v13', '#123');
    box(675, 767, 5, 13, '#22d022'); box(671, 765, 11, 1, '#802018'); box(669, 780, 12, 1, '#8a9a20');
    path('M743.500 751.500h71v71h-71zM743 767.500h71M743 787.500h71M743 806.500h71M766.500 751v16M766.500 787v35M790.500 751v71', '#1414b4');
    const warm = ['#e0a040', '#e8e030', '#b0b0b0', '#e03020', '#f0c890'];
    [[747, 754, 14, 12], [771, 754, 14, 12], [795, 754, 14, 12], [760, 770, 16, 15], [795, 773, 14, 11], [747, 790, 14, 14], [771, 791, 16, 12], [795, 789, 14, 16], [747, 809, 14, 12], [772, 809, 14, 12], [795, 808, 15, 13]].forEach(([x, y, w, h]) => detail(x, y, w, h, warm, 24));
    for (let y = 750; y < 821; y += 2) box(818, y, y < 754 ? 8 : 14 + Math.floor(rnd() * 5), y % 6 ? 2 : 1, '#22e022');
    path('M909.500 753.500h102v77h-102zM909 779.500h102M909 804.500h102M941.500 753v51M973.500 753v51M959.500 804v26', '#1414b4');
    const cool = ['#38d8e0', '#e8e030', '#58d890', '#e8e030', '#38d8e0'];
    [[913, 756, 27, 20], [945, 756, 27, 20], [978, 756, 28, 20], [914, 781, 25, 20], [945, 781, 27, 20], [977, 781, 28, 20], [922, 808, 23, 15], [976, 807, 15, 15]].forEach(([x, y, w, h]) => {
      detail(x, y, w, h, cool, 46);
      box(x, y + h - 4, w - 2, 1, '#dcdcdc'); box(x, y + h, w, 1, '#6a9a30');
    });
    box(565, 864, 7, 12, '#7d8d8d');
    specks(564, 864, 9, 12, 24, ['#5ab890', '#a9b9b9', '#333'], 2);

    document.getElementById('model').innerHTML = shapes.join('');
  </script>
</body>
</html>
